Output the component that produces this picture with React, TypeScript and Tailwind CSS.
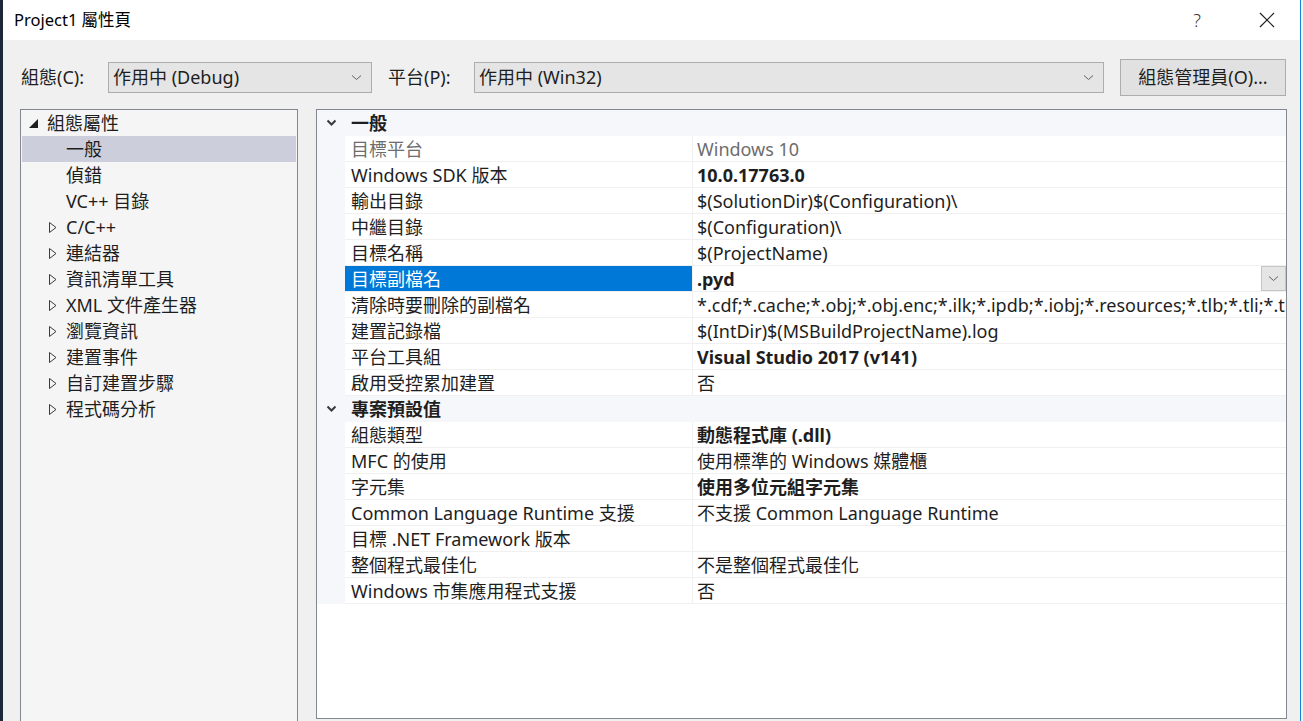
import React from 'react'

const FONT = { fontFamily: '"Segoe UI", "Noto Sans", "Noto Sans CJK TC", sans-serif' }

type Prop = { name: string; value: string; bold?: boolean; muted?: boolean; selected?: boolean }

const general: Prop[] = [
  { name: '目標平台', value: 'Windows 10', muted: true },
  { name: 'Windows SDK 版本', value: '10.0.17763.0', bold: true },
  { name: '輸出目錄', value: '$(SolutionDir)$(Configuration)\\' },
  { name: '中繼目錄', value: '$(Configuration)\\' },
  { name: '目標名稱', value: '$(ProjectName)' },
  { name: '目標副檔名', value: '.pyd', bold: true, selected: true },
  {
    name: '清除時要刪除的副檔名',
    value: '*.cdf;*.cache;*.obj;*.obj.enc;*.ilk;*.ipdb;*.iobj;*.resources;*.tlb;*.tli;*.tlh;*.tmp;*.rsp;*.pgc;*.pgd;*.meta;*.tlog;*.manifest;*.res;*.pch',
  },
  { name: '建置記錄檔', value: '$(IntDir)$(MSBuildProjectName).log' },
  { name: '平台工具組', value: 'Visual Studio 2017 (v141)', bold: true },
  { name: '啟用受控累加建置', value: '否' },
]

const defaults: Prop[] = [
  { name: '組態類型', value: '動態程式庫 (.dll)', bold: true },
  { name: 'MFC 的使用', value: '使用標準的 Windows 媒體櫃' },
  { name: '字元集', value: '使用多位元組字元集', bold: true },
  { name: 'Common Language Runtime 支援', value: '不支援 Common Language Runtime' },
  { name: '目標 .NET Framework 版本', value: '' },
  { name: '整個程式最佳化', value: '不是整個程式最佳化' },
  { name: 'Windows 市集應用程式支援', value: '否' },
]

const tree: { label: string; level: 0 | 1 | 2; selected?: boolean }[] = [
  { label: '組態屬性', level: 0 },
  { label: '一般', level: 1, selected: true },
  { label: '偵錯', level: 1 },
  { label: 'VC++ 目錄', level: 1 },
  { label: 'C/C++', level: 2 },
  { label: '連結器', level: 2 },
  { label: '資訊清單工具', level: 2 },
  { label: 'XML 文件產生器', level: 2 },
  { label: '瀏覽資訊', level: 2 },
  { label: '建置事件', level: 2 },
  { label: '自訂建置步驟', level: 2 },
  { label: '程式碼分析', level: 2 },
]

function SmallChevron() {
  return (
    <svg width="11" height="7" viewBox="0 0 11 7" className="shrink-0">
      <path d="M1 1.5 L5.5 5.5 L10 1.5" fill="none" stroke="#606060" strokeWidth="1" />
    </svg>
  )
}

function Combo({ value, width }: { value: string; width: string }) {
  return (
    <div className={`${width} h-[31px] shrink-0 flex items-center justify-between bg-[#e5e5e5] border border-[#adadad] pl-[4px] pr-[9px] text-[#1e1e1e]`}>
      <span>{value}</span>
      <SmallChevron />
    </div>
  )
}

function GroupHeader({ title }: { title: string }) {
  return (
    <div className="h-[26px] flex items-center bg-[#f5f7fa]">
      <div className="w-[28px] flex justify-center">
        <svg width="11" height="8" viewBox="0 0 11 8">
          <path d="M1.5 1.5 L5.5 5.5 L9.5 1.5" fill="none" stroke="#3a3a3a" strokeWidth="2" />
        </svg>
      </div>
      <span className="pl-[6px] pt-[1px] font-bold text-[#1e1e1e]">{title}</span>
    </div>
  )
}

function PropRow({ p }: { p: Prop }) {
  return (
    <div className="h-[26px] flex">
      <div className="w-[28px] shrink-0 bg-[#f5f7fa]" />
      <div
        className={`w-[347px] shrink-0 flex items-center pl-[6px] pt-[1px] border-b border-[#f0f0f0] ${
          p.selected ? 'bg-[#0078d7] text-white' : p.muted ? 'text-[#6d6d6d]' : 'text-[#1e1e1e]'
        }`}
      >
        <span className="whitespace-nowrap">{p.name}</span>
      </div>
      <div className="flex-1 min-w-0 flex items-center border-l border-b border-[#f0f0f0] overflow-hidden">
        <span
          className={`pl-[4px] pt-[1px] whitespace-nowrap flex-1 min-w-0 overflow-hidden ${p.bold ? 'font-bold' : ''} ${
            p.muted ? 'text-[#6d6d6d]' : 'text-[#1e1e1e]'
          }`}
        >
          {p.value}
        </span>
        {p.selected && (
          <div className="w-[25px] h-[25px] shrink-0 flex items-center justify-center bg-[#e5e5e5] border border-[#c5c5c5]">
            <SmallChevron />
          </div>
        )}
      </div>
    </div>
  )
}

export default function App() {
  return (
    <div className="w-[1303px] h-[721px] flex overflow-hidden bg-white text-[18px]" style={FONT}>
      {/* desktop edge */}
      <div className="w-[3px] shrink-0 bg-[#1c2838]" />

      <div className="flex-1 min-w-0 flex flex-col bg-[#f0f0f0]">
        {/* Title bar */}
        <div className="h-[40px] shrink-0 bg-white flex items-center pl-[11px] pr-[25px]">
          <span className="text-[16.5px] text-black">Project1 屬性頁</span>
          <div className="ml-auto flex items-center gap-[58px]">
            <span className="text-[18px] text-[#333] font-light">?</span>
            <svg width="16" height="16" viewBox="0 0 16 16">
              <path d="M1 1 L15 15 M15 1 L1 15" stroke="#222" strokeWidth="1.2" />
            </svg>
          </div>
        </div>

        {/* Config row */}
        <div className="h-[69px] shrink-0 flex items-center pt-[6px] pl-[18px] text-[#1e1e1e]">
          <span className="w-[87px] shrink-0">組態(C):</span>
          <Combo value="作用中 (Debug)" width="w-[264px]" />
          <span className="ml-[16px] w-[86px] shrink-0">平台(P):</span>
          <Combo value="作用中 (Win32)" width="w-[630px]" />
          <div className="ml-[16px] w-[166px] h-[37px] shrink-0 flex items-center justify-center bg-[#e1e1e1] border border-[#adadad]">
            組態管理員(O)...
          </div>
        </div>

        {/* Panels */}
        <div className="flex-1 min-h-0 flex pl-[17px] pr-[13px] gap-[18px]">
          {/* Tree */}
          <div className="w-[278px] h-[640px] shrink-0 bg-[#f5f5f5] border border-[#828790]">
            {tree.map((t) => (
              <div
                key={t.label}
                className={`h-[26px] flex items-center mx-[1px] ${t.selected ? 'bg-[#cccedb]' : ''}`}
              >
                {t.level === 0 && (
                  <div className="w-[25px] pl-[7px] flex items-center">
                    <svg width="9" height="9" viewBox="0 0 9 9">
                      <polygon points="9,0 9,9 0,9" fill="#1e1e1e" />
                    </svg>
                  </div>
                )}
                {t.level === 1 && <div className="w-[44px]" />}
                {t.level === 2 && (
                  <div className="w-[44px] pl-[27px] flex items-center">
                    <svg width="8" height="11" viewBox="0 0 8 11">
                      <polygon points="0.5,0.5 7,5.5 0.5,10.5" fill="none" stroke="#3a3a3a" strokeWidth="1" />
                    </svg>
                  </div>
                )}
                <span className="text-[#1e1e1e] whitespace-nowrap">{t.label}</span>
              </div>
            ))}
          </div>

          {/* Property grid */}
          <div className="flex-1 min-w-0 h-[610px] bg-white border border-[#828790] overflow-hidden">
            <GroupHeader title="一般" />
            {general.map((p) => (
              <PropRow key={p.name} p={p} />
            ))}
            <GroupHeader title="專案預設值" />
            {defaults.map((p) => (
              <PropRow key={p.name} p={p} />
            ))}
          </div>
        </div>
      </div>

      {/* window edge */}
      <div className="w-[1px] shrink-0 bg-[#1883d7]" />
      <div className="w-[2px] shrink-0 bg-[#f4f4f4]" />
    </div>
  )
}
